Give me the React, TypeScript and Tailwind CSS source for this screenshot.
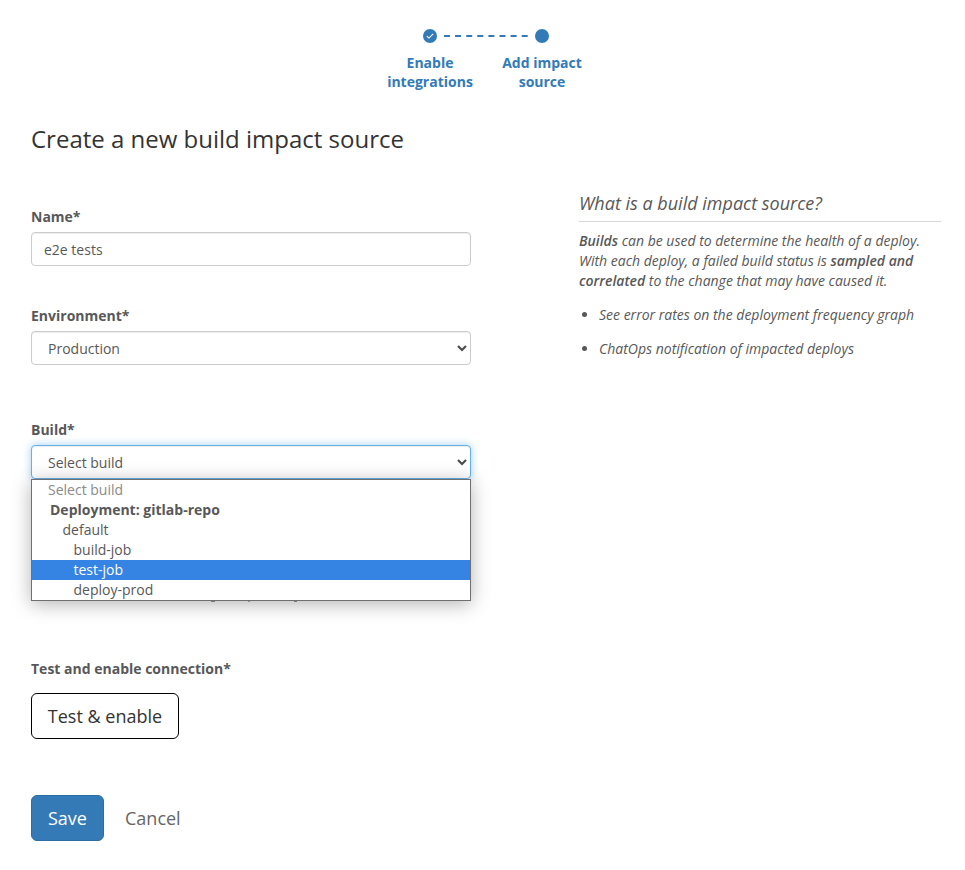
import React from 'react';

function Chevron() {
  return (
    <svg width="10" height="7" viewBox="0 0 10 7" className="shrink-0" fill="none" stroke="#4d4d4d" strokeWidth="2.2">
      <path d="M1 1l4 4 4-4" />
    </svg>
  );
}

function Step({ label, done }: { label: string; done?: boolean }) {
  return (
    <div className="flex w-[112px] flex-col items-center text-center">
      <svg width="14" height="14" viewBox="0 0 14 14">
        <circle cx="7" cy="7" r="7" fill="#337ab7" />
        {done && <path d="M3.8 7.2l2.1 1.9L10.2 4.9" fill="none" stroke="#fff" strokeWidth="1.1" />}
      </svg>
      <div className="mt-[10px] w-[90px] text-[14px] leading-[19px] font-bold text-[#337ab7]">{label}</div>
    </div>
  );
}

const options = [
  { text: 'Select build', style: 'pl-4 text-[#8a8a8a]' },
  { text: 'Deployment: gitlab-repo', style: 'pl-[18px] font-bold' },
  { text: 'default', style: 'pl-[30.5px]' },
  { text: 'build-job', style: 'pl-[41.5px]' },
  { text: 'test-job', style: 'pl-[41.5px] bg-[#3584e4] text-white' },
  { text: 'deploy-prod', style: 'pl-[41.5px]' },
];

const label = 'h-5 font-bold';
const field =
  'mt-[5px] flex h-[34px] w-full items-center justify-between rounded-[4px] border bg-white pr-[3px] shadow-[inset_0_1px_1px_rgba(0,0,0,0.075)]';

export default function App() {
  return (
    <main className="h-[870px] w-[965px] overflow-hidden bg-white font-['Open_Sans',sans-serif] text-[14px] leading-5 text-[#585858]">
      <div className="relative flex h-[115px] justify-center pt-[29px] pl-[7px]">
        <Step label="Enable integrations" done />
        <Step label="Add impact source" />
        <svg className="absolute top-[35px] left-[444px]" width="84" height="2">
          <path d="M0 1H84" stroke="#337ab7" strokeWidth="2" strokeDasharray="6 5.1" />
        </svg>
      </div>
      <h1 className="h-[72px] pt-2 pl-[31px] text-[24px] leading-8 text-[#333]">Create a new build impact source</h1>
      <div className="flex justify-between pr-[24px] pl-[31px]">
        <form className="w-[440px] pt-5">
          <div className={label}>Name*</div>
          <div className={`${field} border-[#ccc] pl-3`}>
            <span className="pt-[2px]">e2e tests</span>
          </div>
          <div className={`${label} mt-10`}>Environment*</div>
          <div className={`${field} border-[#ccc] pl-4`}>
            <span className="pt-[2px]">Production</span>
            <Chevron />
          </div>
          <div className={`${label} mt-[55px]`}>Build*</div>
          <div className="relative mt-[5px] h-[155px]">
            <div className="flex h-[34px] w-full items-center justify-between rounded-[4px] border border-[#66afe9] bg-white pr-[3px] pl-4 shadow-[inset_0_1px_1px_rgba(0,0,0,0.075),0_0_8px_rgba(102,175,233,0.6)]">
              <span className="pt-[2px]">Select build</span>
              <Chevron />
            </div>
            <div className="absolute top-[34px] left-0 h-[122px] w-full border border-[#707070] bg-white shadow-[0_3px_18px_rgba(0,0,0,0.3)]">
              {options.map((o) => (
                <div key={o.text} className={`h-5 ${o.style}`}>
                  {o.text}
                </div>
              ))}
            </div>
            {/* Descenders of the help line that the open menu covers */}
            <svg className="absolute top-[156px] left-[180px]" width="120" height="1" fill="#555">
              <rect x="0" width="4" height="1" opacity="0.7" />
              <rect x="37" width="2" height="1" opacity="0.5" />
              <rect x="83" width="3" height="1" opacity="0.7" />
            </svg>
          </div>
          <div className={`${label} mt-[59px]`}>Test and enable connection*</div>
          <button
            type="button"
            className="mt-[14px] flex h-[46px] w-[148px] items-center justify-center rounded-[6px] border border-black text-[18px] leading-6 text-[#333]"
          >
            Test &amp; enable
          </button>
          <div className="mt-14 flex items-center">
            <button
              type="button"
              className="h-[46px] w-[73px] rounded-[6px] border border-[#2e6da4] bg-[#337ab7] text-[18px] leading-6 text-white"
            >
              Save
            </button>
            <button type="button" className="ml-[21px] text-[18px] leading-6 text-[#666]">
              Cancel
            </button>
          </div>
        </form>
        <aside className="w-[362px] pt-[3px] italic">
          <h2 className="h-[32px] border-b border-[#d8d8d8] pt-[1px] text-[18px] leading-6">What is a build impact source?</h2>
          <p className="mt-[9px]">
            <b className="font-semibold">Builds</b> can be used to determine the health of a deploy. With each deploy, a
            failed build status is <b className="font-semibold">sampled and correlated</b> to the change that may have
            caused it.
          </p>
          <ul className="mt-[14px] list-disc pl-5">
            <li>See error rates on the deployment frequency graph</li>
            <li className="mt-[14px]">ChatOps notification of impacted deploys</li>
          </ul>
        </aside>
      </div>
    </main>
  );
}
